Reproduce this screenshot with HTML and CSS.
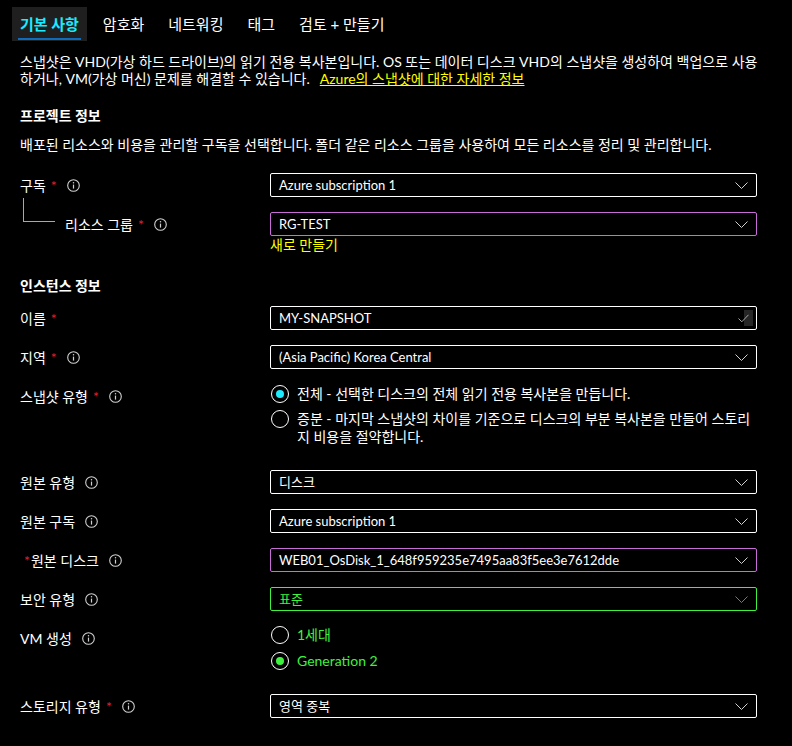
FILE: index.html
```html
<!DOCTYPE html>
<html lang="ko">
<head>
  <meta charset="UTF-8">
  <meta name="viewport" content="width=device-width, initial-scale=1.0">
  <title>스냅샷 만들기</title>
  <link rel="stylesheet" href="styles.css">
</head>
<body>
  <div class="tabs">
    <div class="tab active">기본 사항</div>
    <div class="tab">암호화</div>
    <div class="tab">네트워킹</div>
    <div class="tab">태그</div>
    <div class="tab">검토 + 만들기</div>
  </div>

  <div class="content">
    <p class="intro"><span>스냅샷은 VHD(가상 하드 드라이브)의 읽기 전용 복사본입니다. OS 또는 데이터 디스크 VHD의 스냅샷을 생성하여 백업으로 사용</span><br><span>하거나, VM(가상 머신) 문제를 해결할 수 있습니다.</span><a class="link" href="#">Azure의 스냅샷에 대한 자세한 정보</a></p>

    <h2 class="section-title">프로젝트 정보</h2>
    <p class="section-desc">배포된 리소스와 비용을 관리할 구독을 선택합니다. 폴더 같은 리소스 그룹을 사용하여 모든 리소스를 정리 및 관리합니다.</p>

    <div class="row">
      <div class="label">구독<span class="req">*</span><svg class="info" width="13" height="13" viewBox="0 0 13 13"><circle cx="6.5" cy="6.5" r="5.8" fill="none" stroke="#d0d0d0" stroke-width="1.1"/><rect x="5.9" y="5.6" width="1.2" height="4" fill="#d0d0d0"/><circle cx="6.5" cy="3.8" r="0.75" fill="#d0d0d0"/></svg></div>
      <div class="field">
        <div class="select"><span>Azure subscription 1</span><svg class="chevron" width="13" height="7" viewBox="0 0 13 7"><polyline points="0.5,0.5 6.5,6.5 12.5,0.5" fill="none" stroke="#d0d0d0" stroke-width="1"/></svg></div>
      </div>
    </div>

    <div class="row">
      <div class="label"><span class="tree"></span>리소스 그룹<span class="req">*</span><svg class="info" width="13" height="13" viewBox="0 0 13 13"><circle cx="6.5" cy="6.5" r="5.8" fill="none" stroke="#d0d0d0" stroke-width="1.1"/><rect x="5.9" y="5.6" width="1.2" height="4" fill="#d0d0d0"/><circle cx="6.5" cy="3.8" r="0.75" fill="#d0d0d0"/></svg></div>
      <div class="field">
        <div class="select purple"><span>RG-TEST</span><svg class="chevron" width="13" height="7" viewBox="0 0 13 7"><polyline points="0.5,0.5 6.5,6.5 12.5,0.5" fill="none" stroke="#d0d0d0" stroke-width="1"/></svg></div>
        <a class="create-link" href="#">새로 만들기</a>
      </div>
    </div>

    <h2 class="section-title">인스턴스 정보</h2>

    <div class="row">
      <div class="label">이름<span class="req">*</span></div>
      <div class="field">
        <div class="select"><span>MY-SNAPSHOT</span><span class="valid"><svg width="11" height="9" viewBox="0 0 11 9"><polyline points="0.5,4.5 3.8,7.8 10.5,0.8" fill="none" stroke="#a8a8a8" stroke-width="1"/></svg></span></div>
      </div>
    </div>

    <div class="row">
      <div class="label">지역<span class="req">*</span><svg class="info" width="13" height="13" viewBox="0 0 13 13"><circle cx="6.5" cy="6.5" r="5.8" fill="none" stroke="#d0d0d0" stroke-width="1.1"/><rect x="5.9" y="5.6" width="1.2" height="4" fill="#d0d0d0"/><circle cx="6.5" cy="3.8" r="0.75" fill="#d0d0d0"/></svg></div>
      <div class="field">
        <div class="select"><span>(Asia Pacific) Korea Central</span><svg class="chevron" width="13" height="7" viewBox="0 0 13 7"><polyline points="0.5,0.5 6.5,6.5 12.5,0.5" fill="none" stroke="#d0d0d0" stroke-width="1"/></svg></div>
      </div>
    </div>

    <div class="row radios">
      <div class="label">스냅샷 유형<span class="req">*</span><svg class="info" width="13" height="13" viewBox="0 0 13 13"><circle cx="6.5" cy="6.5" r="5.8" fill="none" stroke="#d0d0d0" stroke-width="1.1"/><rect x="5.9" y="5.6" width="1.2" height="4" fill="#d0d0d0"/><circle cx="6.5" cy="3.8" r="0.75" fill="#d0d0d0"/></svg></div>
      <div class="field radio-group">
        <div class="option"><span class="radio on"></span><span class="option-text">전체 - 선택한 디스크의 전체 읽기 전용 복사본을 만듭니다.</span></div>
        <div class="option"><span class="radio"></span><span class="option-text">증분 - 마지막 스냅샷의 차이를 기준으로 디스크의 부분 복사본을 만들어 스토리지 비용을 절약합니다.</span></div>
      </div>
    </div>

    <div class="row">
      <div class="label">원본 유형<svg class="info" width="13" height="13" viewBox="0 0 13 13"><circle cx="6.5" cy="6.5" r="5.8" fill="none" stroke="#d0d0d0" stroke-width="1.1"/><rect x="5.9" y="5.6" width="1.2" height="4" fill="#d0d0d0"/><circle cx="6.5" cy="3.8" r="0.75" fill="#d0d0d0"/></svg></div>
      <div class="field">
        <div class="select"><span>디스크</span><svg class="chevron" width="13" height="7" viewBox="0 0 13 7"><polyline points="0.5,0.5 6.5,6.5 12.5,0.5" fill="none" stroke="#d0d0d0" stroke-width="1"/></svg></div>
      </div>
    </div>

    <div class="row">
      <div class="label">원본 구독<svg class="info" width="13" height="13" viewBox="0 0 13 13"><circle cx="6.5" cy="6.5" r="5.8" fill="none" stroke="#d0d0d0" stroke-width="1.1"/><rect x="5.9" y="5.6" width="1.2" height="4" fill="#d0d0d0"/><circle cx="6.5" cy="3.8" r="0.75" fill="#d0d0d0"/></svg></div>
      <div class="field">
        <div class="select"><span>Azure subscription 1</span><svg class="chevron" width="13" height="7" viewBox="0 0 13 7"><polyline points="0.5,0.5 6.5,6.5 12.5,0.5" fill="none" stroke="#d0d0d0" stroke-width="1"/></svg></div>
      </div>
    </div>

    <div class="row">
      <div class="label"><span class="req lead">*</span>원본 디스크<svg class="info" width="13" height="13" viewBox="0 0 13 13"><circle cx="6.5" cy="6.5" r="5.8" fill="none" stroke="#d0d0d0" stroke-width="1.1"/><rect x="5.9" y="5.6" width="1.2" height="4" fill="#d0d0d0"/><circle cx="6.5" cy="3.8" r="0.75" fill="#d0d0d0"/></svg></div>
      <div class="field">
        <div class="select purple"><span>WEB01_OsDisk_1_648f959235e7495aa83f5ee3e7612dde</span><svg class="chevron" width="13" height="7" viewBox="0 0 13 7"><polyline points="0.5,0.5 6.5,6.5 12.5,0.5" fill="none" stroke="#d0d0d0" stroke-width="1"/></svg></div>
      </div>
    </div>

    <div class="row">
      <div class="label">보안 유형<svg class="info" width="13" height="13" viewBox="0 0 13 13"><circle cx="6.5" cy="6.5" r="5.8" fill="none" stroke="#d0d0d0" stroke-width="1.1"/><rect x="5.9" y="5.6" width="1.2" height="4" fill="#d0d0d0"/><circle cx="6.5" cy="3.8" r="0.75" fill="#d0d0d0"/></svg></div>
      <div class="field">
        <div class="select green"><span>표준</span><svg class="chevron" width="13" height="7" viewBox="0 0 13 7"><polyline points="0.5,0.5 6.5,6.5 12.5,0.5" fill="none" stroke="#7a7a7a" stroke-width="1"/></svg></div>
      </div>
    </div>

    <div class="row radios">
      <div class="label">VM 생성<svg class="info" width="13" height="13" viewBox="0 0 13 13"><circle cx="6.5" cy="6.5" r="5.8" fill="none" stroke="#d0d0d0" stroke-width="1.1"/><rect x="5.9" y="5.6" width="1.2" height="4" fill="#d0d0d0"/><circle cx="6.5" cy="3.8" r="0.75" fill="#d0d0d0"/></svg></div>
      <div class="field radio-group gen">
        <div class="option"><span class="radio"></span><span class="option-text green-text">1세대</span></div>
        <div class="option"><span class="radio on green"></span><span class="option-text green-text">Generation 2</span></div>
      </div>
    </div>

    <div class="row">
      <div class="label">스토리지 유형<span class="req">*</span><svg class="info" width="13" height="13" viewBox="0 0 13 13"><circle cx="6.5" cy="6.5" r="5.8" fill="none" stroke="#d0d0d0" stroke-width="1.1"/><rect x="5.9" y="5.6" width="1.2" height="4" fill="#d0d0d0"/><circle cx="6.5" cy="3.8" r="0.75" fill="#d0d0d0"/></svg></div>
      <div class="field">
        <div class="select"><span>영역 중복</span><svg class="chevron" width="13" height="7" viewBox="0 0 13 7"><polyline points="0.5,0.5 6.5,6.5 12.5,0.5" fill="none" stroke="#d0d0d0" stroke-width="1"/></svg></div>
      </div>
    </div>
  </div>
</body>
</html>
```

FILE: styles.css
```css
body {
  margin: 0;
  background-color: #000;
  color: #fff;
  font-family: Lato, "Noto Sans CJK KR", sans-serif;
  font-size: 14px;
  line-height: 17px;
}

.tabs {
  display: flex;
  padding: 7px 0 0 12px;
}

.tab {
  position: relative;
  height: 34px;
  line-height: 34px;
  padding: 0 8px;
  margin-right: 8px;
  font-size: 15px;
}

.tab.active {
  background-color: #1f1f1f;
  color: #1aebff;
  font-weight: 700;
}

.tab.active::after {
  content: "";
  position: absolute;
  left: 6px;
  right: 6px;
  bottom: 1px;
  height: 2px;
  background-color: #0f6cbd;
}

.content {
  padding: 0 20px;
}

.intro {
  margin: 12px 0 0;
  width: 760px;
}

.link {
  display: inline-block;
  margin-left: 10px;
  color: #ffff00;
  text-decoration: underline;
}

.section-title {
  font-size: 14px;
  font-weight: 700;
  line-height: 17px;
  margin: 20px 0 12px;
}

.section-desc {
  margin: 0 0 20px;
}

.row {
  display: grid;
  grid-template-columns: 250px 487px;
  margin-bottom: 15px;
}

.label {
  display: flex;
  align-items: center;
  height: 24px;
}

.row.radios .label {
  align-items: flex-start;
  height: auto;
  padding-top: 4px;
  line-height: 17px;
}

.row.radios .label .info {
  margin-top: 2px;
}

.req {
  color: #e0212f;
  margin-left: 5px;
}

.req.lead {
  margin: 0 1px 0 4px;
}

.info {
  margin-left: 10px;
  flex-shrink: 0;
}

.tree {
  align-self: flex-start;
  width: 31px;
  height: 23px;
  margin: -14px 10px 0 3px;
  border-left: 1px solid #a8a8a8;
  border-bottom: 1px solid #a8a8a8;
}

.select {
  height: 24px;
  box-sizing: border-box;
  border: 1px solid #fff;
  border-radius: 2px;
  padding: 0 8px;
  display: flex;
  align-items: center;
  justify-content: space-between;
  font-size: 13px;
}

.select.purple {
  border-color: #c86dd7;
}

.select.green {
  border-color: #3ff23f;
  color: #3ff23f;
}

.valid {
  display: flex;
  align-items: center;
  height: 16px;
  padding-right: 4px;
  margin-right: -5px;
  background: linear-gradient(to right, transparent 6px, #262626 6px);
}

.create-link {
  display: block;
  color: #ffff00;
  text-decoration: none;
  margin-bottom: 4px;
}

.radio-group {
  display: flex;
  flex-direction: column;
  gap: 7px;
  padding: 1px 0 9px;
}

.radio-group.gen {
  gap: 8px;
  padding-top: 0;
}

.option {
  display: flex;
  align-items: flex-start;
  line-height: 18px;
}

.radio {
  width: 18px;
  height: 18px;
  box-sizing: border-box;
  border: 1.5px solid #fff;
  border-radius: 50%;
  margin: 0 8px 0 1px;
  flex-shrink: 0;
  display: flex;
  align-items: center;
  justify-content: center;
}

.radio.on::after {
  content: "";
  width: 8px;
  height: 8px;
  border-radius: 50%;
  background-color: #1aebff;
}

.radio.on.green::after {
  background-color: #3ff23f;
}

.green-text {
  color: #3ff23f;
}
```
